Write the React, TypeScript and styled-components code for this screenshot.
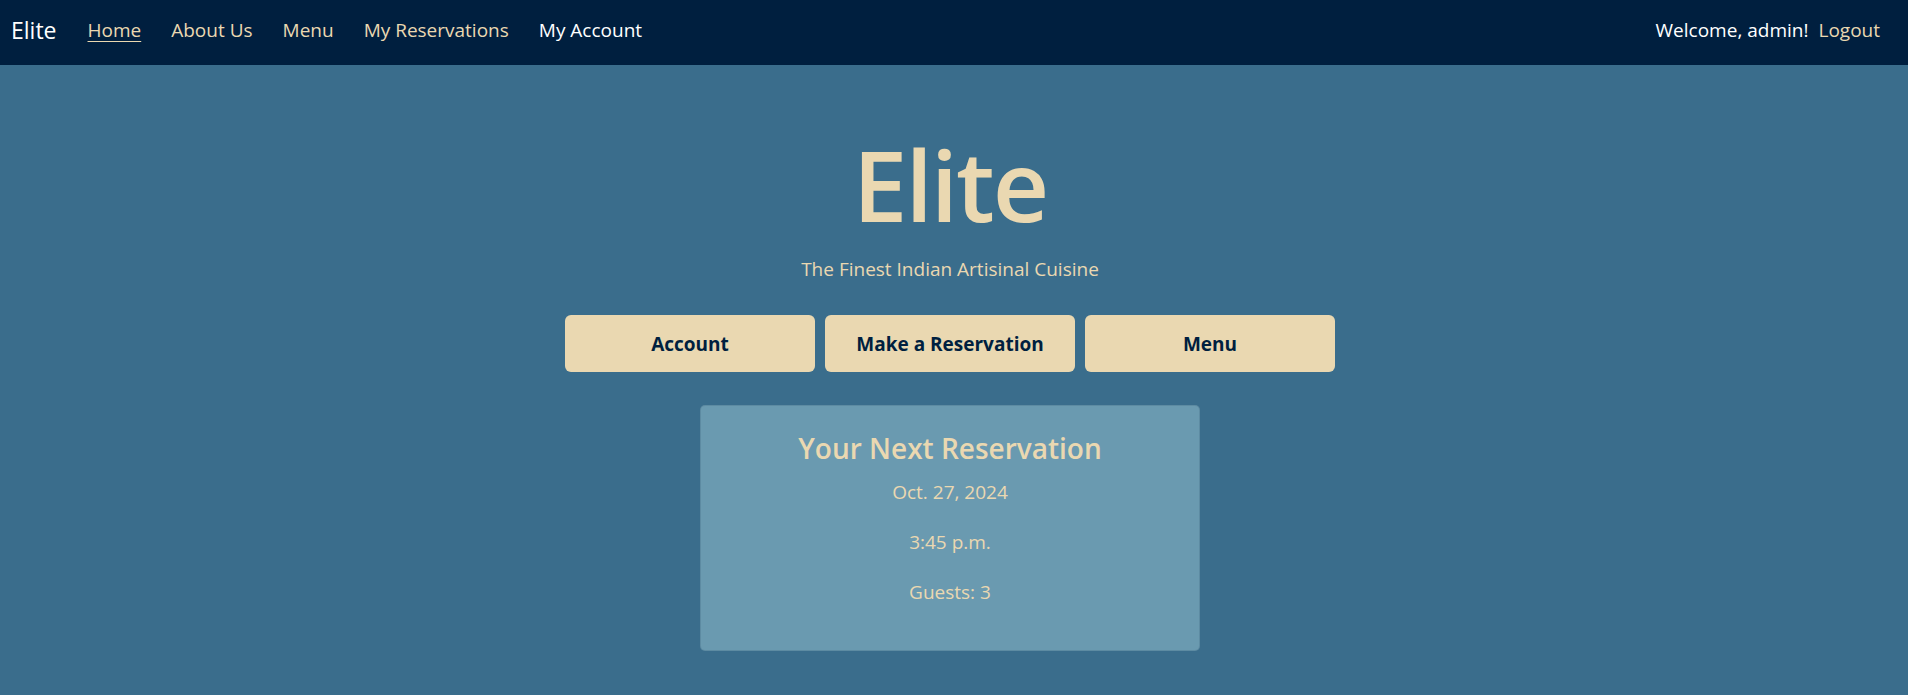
import React from 'react';
import styled, { createGlobalStyle } from 'styled-components';

const navy = '#001f3f';
const steel = '#3a6d8c';
const sky = '#6a9ab0';
const cream = '#ead8b1';

const GlobalStyle = createGlobalStyle`
    html, body {
        margin: 0;
        padding: 0;
        background-color: ${steel};
        font-family: 'Open Sans', 'Noto Sans', sans-serif;
    }
    * {
        box-sizing: border-box;
    }
`;

const Page = styled.div`
    min-height: 695px;
    background-color: ${steel};
`;

const NavBar = styled.nav`
    height: 65px;
    background-color: ${navy};
    display: flex;
    align-items: center;
    justify-content: space-between;
    padding: 0 28px 5px 11px;
`;

const NavLeft = styled.div`
    display: flex;
    align-items: center;
    gap: 30px;
`;

const Brand = styled.a`
    color: #ffffff;
    font-size: 23px;
    text-decoration: none;
    margin-right: 1px;
`;

const NavLink = styled.a<{ $active?: boolean; $light?: boolean }>`
    color: ${(p) => (p.$light ? '#ffffff' : cream)};
    font-size: 19px;
    text-decoration: ${(p) => (p.$active ? 'underline' : 'none')};
    text-underline-offset: 4px;
`;

const NavRight = styled.div`
    display: flex;
    align-items: center;
    gap: 10px;
`;

const Welcome = styled.span`
    color: #ffffff;
    font-size: 19px;
`;

const Hero = styled.section`
    display: flex;
    flex-direction: column;
    align-items: center;
    padding: 61px 8px 0 0;
`;

const Title = styled.h1`
    margin: 0;
    color: ${cream};
    font-size: 98px;
    font-weight: 600;
    line-height: 1.2;
    letter-spacing: -2px;
`;

const Tagline = styled.p`
    margin: 11px 0 0;
    color: ${cream};
    font-size: 19px;
    line-height: 1.5;
`;

const ButtonRow = styled.div`
    display: flex;
    gap: 10px;
    margin-top: 32px;
`;

const HeroButton = styled.a`
    width: 250px;
    height: 57px;
    display: flex;
    align-items: center;
    justify-content: center;
    background-color: ${cream};
    color: ${navy};
    border-radius: 6px;
    font-size: 19px;
    font-weight: 700;
    text-decoration: none;
`;

const Card = styled.div`
    width: 500px;
    margin-top: 33px;
    padding: 26px 24px 22px;
    background-color: ${sky};
    border: 1px solid rgba(0, 31, 63, 0.12);
    border-radius: 5px;
    text-align: center;
`;

const CardTitle = styled.h3`
    margin: 0 0 12px;
    color: ${cream};
    font-size: 28px;
    font-weight: 600;
    line-height: 1.2;
`;

const CardLine = styled.p`
    margin: 0 0 21.5px;
    color: ${cream};
    font-size: 19px;
    line-height: 1.5;
`;

const App: React.FC = () => {
    return (
        <Page>
            <GlobalStyle />
            <NavBar>
                <NavLeft>
                    <Brand href="#">Elite</Brand>
                    <NavLink href="#" $active>Home</NavLink>
                    <NavLink href="#about">About Us</NavLink>
                    <NavLink href="#menu">Menu</NavLink>
                    <NavLink href="#reservations">My Reservations</NavLink>
                    <NavLink href="#account" $light>My Account</NavLink>
                </NavLeft>
                <NavRight>
                    <Welcome>Welcome, admin!</Welcome>
                    <NavLink href="#logout">Logout</NavLink>
                </NavRight>
            </NavBar>
            <Hero>
                <Title>Elite</Title>
                <Tagline>The Finest Indian Artisinal Cuisine</Tagline>
                <ButtonRow>
                    <HeroButton href="#account">Account</HeroButton>
                    <HeroButton href="#reserve">Make a Reservation</HeroButton>
                    <HeroButton href="#menu">Menu</HeroButton>
                </ButtonRow>
                <Card>
                    <CardTitle>Your Next Reservation</CardTitle>
                    <CardLine>Oct. 27, 2024</CardLine>
                    <CardLine>3:45 p.m.</CardLine>
                    <CardLine>Guests: 3</CardLine>
                </Card>
            </Hero>
        </Page>
    );
};

export default App;
